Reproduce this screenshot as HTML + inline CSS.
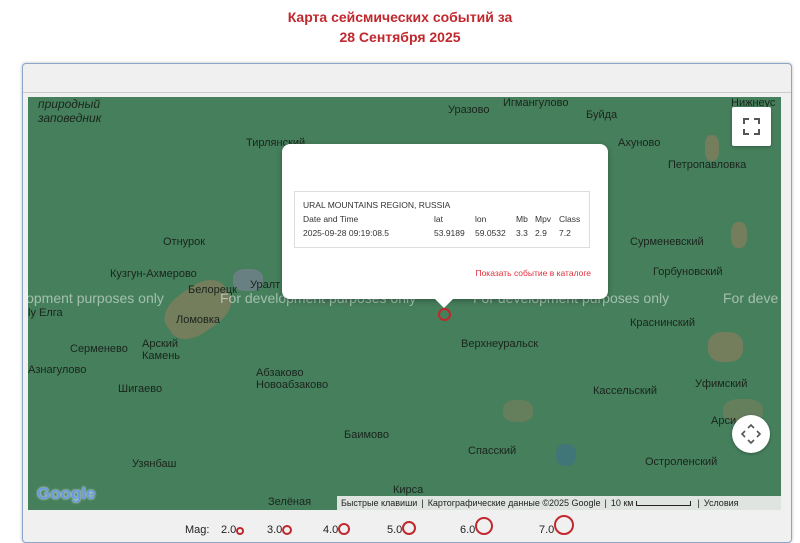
<!DOCTYPE html>
<html><head><meta charset="utf-8"><style>
*{margin:0;padding:0;box-sizing:border-box}
body{width:800px;height:533px;overflow:hidden;background:#fff;font-family:"Liberation Sans",sans-serif;position:relative}
.t{position:absolute;left:0;width:800px;text-align:center;color:#c0282d;font-weight:bold;font-size:14px;line-height:20px}
.panel{position:absolute;left:22px;top:63px;width:770px;height:480px;border:1px solid #8aa6c8;border-radius:4px;background:#f0f0f0;box-shadow:0 0 3px #bbb}
.map{position:absolute;left:28px;top:97px;width:753px;height:413px;background:#467f5c;overflow:hidden}
.l{position:absolute;font-size:11px;color:#1a241d;white-space:nowrap}
.w{position:absolute;font-size:14px;color:rgba(255,255,255,.5);white-space:nowrap;top:193px}
.brown{position:absolute;background:#937c5c;opacity:.6;border-radius:40%}
.pop{position:absolute;left:282px;top:144px;width:326px;height:155px;background:#fff;border-radius:8px;box-shadow:0 2px 6px rgba(0,0,0,.3)}
.pop:after{content:"";position:absolute;left:152px;bottom:-9px;border-left:10px solid transparent;border-right:10px solid transparent;border-top:10px solid #fff}
.box{position:absolute;left:12px;top:47px;width:296px;height:57px;border:1px solid #ddd;font-size:8.5px;color:#333;padding:8px 8px}
.box div{height:14px;position:relative}
.box span{position:absolute}
.btn{position:absolute;background:#fff;border-radius:2px;box-shadow:0 1px 3px rgba(0,0,0,.3)}
.attr{position:absolute;top:496px;height:14px;background:rgba(240,240,240,.9);font-size:9px;color:#222;line-height:14px;white-space:nowrap}
.lg{position:absolute;top:516px;height:20px;display:flex;align-items:flex-end;font-size:11px;color:#222;line-height:12px}
.c{display:block;border:2px solid #c0282d;border-radius:50%;margin-bottom:1px}
</style></head><body>
<div class="t" style="top:7px">Карта сейсмических событий за</div>
<div class="t" style="top:27px">28 Сентября 2025</div>
<div class="panel"></div>
<div style="position:absolute;left:23px;top:92px;width:768px;height:1px;background:#ccc"></div>
<div class="map">
<div class="brown" style="left:135px;top:190px;width:70px;height:45px;transform:rotate(-35deg)"></div>
<div class="brown" style="left:205px;top:172px;width:30px;height:22px;background:#7f809a"></div>
<div class="brown" style="left:677px;top:38px;width:14px;height:26px"></div>
<div class="brown" style="left:703px;top:125px;width:16px;height:26px"></div>
<div class="brown" style="left:680px;top:235px;width:35px;height:30px"></div>
<div class="brown" style="left:475px;top:303px;width:30px;height:22px;opacity:.4"></div>
<div class="brown" style="left:695px;top:302px;width:40px;height:24px;opacity:.4"></div>
<div class="brown" style="left:528px;top:347px;width:20px;height:22px;background:#3e6f8a"></div>
<div class="l" style="left:10px;top:0;font-style:italic;font-size:12px">природный<br>заповедник</div>
<div class="l" style="left:218px;top:40px">Тирлянский</div>
<div class="l" style="left:420px;top:7px">Уразово</div>
<div class="l" style="left:475px;top:0">Игмангулово</div>
<div class="l" style="left:558px;top:12px">Буйда</div>
<div class="l" style="left:590px;top:40px">Ахуново</div>
<div class="l" style="left:640px;top:62px">Петропавловка</div>
<div class="l" style="left:703px;top:0">Нижнеус</div>
<div class="l" style="left:135px;top:139px">Отнурок</div>
<div class="l" style="left:82px;top:171px">Кузгун-Ахмерово</div>
<div class="l" style="left:160px;top:187px">Белорецк</div>
<div class="l" style="left:222px;top:182px">Уралт</div>
<div class="l" style="left:0;top:210px">ly Елга</div>
<div class="l" style="left:148px;top:217px">Ломовка</div>
<div class="l" style="left:42px;top:246px">Серменево</div>
<div class="l" style="left:114px;top:241px">Арский<br>Камень</div>
<div class="l" style="left:0;top:267px">Азнагулово</div>
<div class="l" style="left:90px;top:286px">Шигаево</div>
<div class="l" style="left:228px;top:270px">Абзаково<br>Новоабзаково</div>
<div class="l" style="left:316px;top:332px">Баимово</div>
<div class="l" style="left:104px;top:361px">Узянбаш</div>
<div class="l" style="left:440px;top:348px">Спасский</div>
<div class="l" style="left:365px;top:387px">Кирса</div>
<div class="l" style="left:240px;top:399px">Зелёная</div>
<div class="l" style="left:433px;top:241px">Верхнеуральск</div>
<div class="l" style="left:602px;top:139px">Сурменевский</div>
<div class="l" style="left:625px;top:169px">Горбуновский</div>
<div class="l" style="left:602px;top:220px">Краснинский</div>
<div class="l" style="left:565px;top:288px">Кассельский</div>
<div class="l" style="left:667px;top:281px">Уфимский</div>
<div class="l" style="left:683px;top:318px">Арси</div>
<div class="l" style="left:617px;top:359px">Остроленский</div>
<div class="w" style="left:-5px">lopment purposes only</div>
<div class="w" style="left:192px">For development purposes only</div>
<div class="w" style="left:445px">For development purposes only</div>
<div class="w" style="left:695px">For deve</div>
<div style="position:absolute;left:410px;top:211px;width:13px;height:13px;border:2px solid #c0282d;border-radius:50%"></div>
<div style="position:absolute;left:9px;top:387px;font-size:17px;font-weight:bold;color:#6a9ae0;text-shadow:0 0 2px #fff">Google</div>
</div>
<div class="btn" style="left:732px;top:107px;width:39px;height:39px"><svg width="39" height="39"><path d="M12 17v-5h5M22 12h5v5M27 22v5h-5M17 27h-5v-5" stroke="#555" stroke-width="2" fill="none"/></svg></div>
<div style="position:absolute;left:732px;top:415px;width:38px;height:38px;border-radius:50%;background:#fff;box-shadow:0 1px 3px rgba(0,0,0,.3)"><svg width="38" height="38"><path d="M16 13l3-3 3 3M16 25l3 3 3-3M13 16l-3 3 3 3M25 16l3 3-3 3" stroke="#555" stroke-width="1.6" fill="none"/></svg></div>
<div class="pop"><div class="box">
<div>URAL MOUNTAINS REGION, RUSSIA</div>
<div><span style="left:0">Date and Time</span><span style="left:131px">lat</span><span style="left:172px">lon</span><span style="left:213px">Mb</span><span style="left:232px">Mpv</span><span style="left:256px">Class</span></div>
<div><span style="left:0">2025-09-28 09:19:08.5</span><span style="left:131px">53.9189</span><span style="left:172px">59.0532</span><span style="left:213px">3.3</span><span style="left:232px">2.9</span><span style="left:256px">7.2</span></div>
</div>
<div style="position:absolute;right:17px;top:124px;font-size:8.5px;color:#e0303a">Показать событие в каталоге</div></div>
<div class="attr" style="left:337px;width:444px"><span style="padding:0 4px">Быстрые клавиши</span>|<span style="padding:0 4px">Картографические данные ©2025 Google</span>|<span style="padding:0 4px">10 км <span style="display:inline-block;width:55px;height:5px;border:1px solid #222;border-top:none"></span></span> |<span style="padding:0 4px">Условия</span></div>
<div class="lg" style="left:185px">Mag:</div>
<div class="lg" style="left:221px">2.0<span class="c" style="width:8px;height:8px"></span></div>
<div class="lg" style="left:267px">3.0<span class="c" style="width:10px;height:10px"></span></div>
<div class="lg" style="left:323px">4.0<span class="c" style="width:12px;height:12px"></span></div>
<div class="lg" style="left:387px">5.0<span class="c" style="width:14px;height:14px"></span></div>
<div class="lg" style="left:460px">6.0<span class="c" style="width:18px;height:18px"></span></div>
<div class="lg" style="left:539px">7.0<span class="c" style="width:20px;height:20px"></span></div>
</body></html>
